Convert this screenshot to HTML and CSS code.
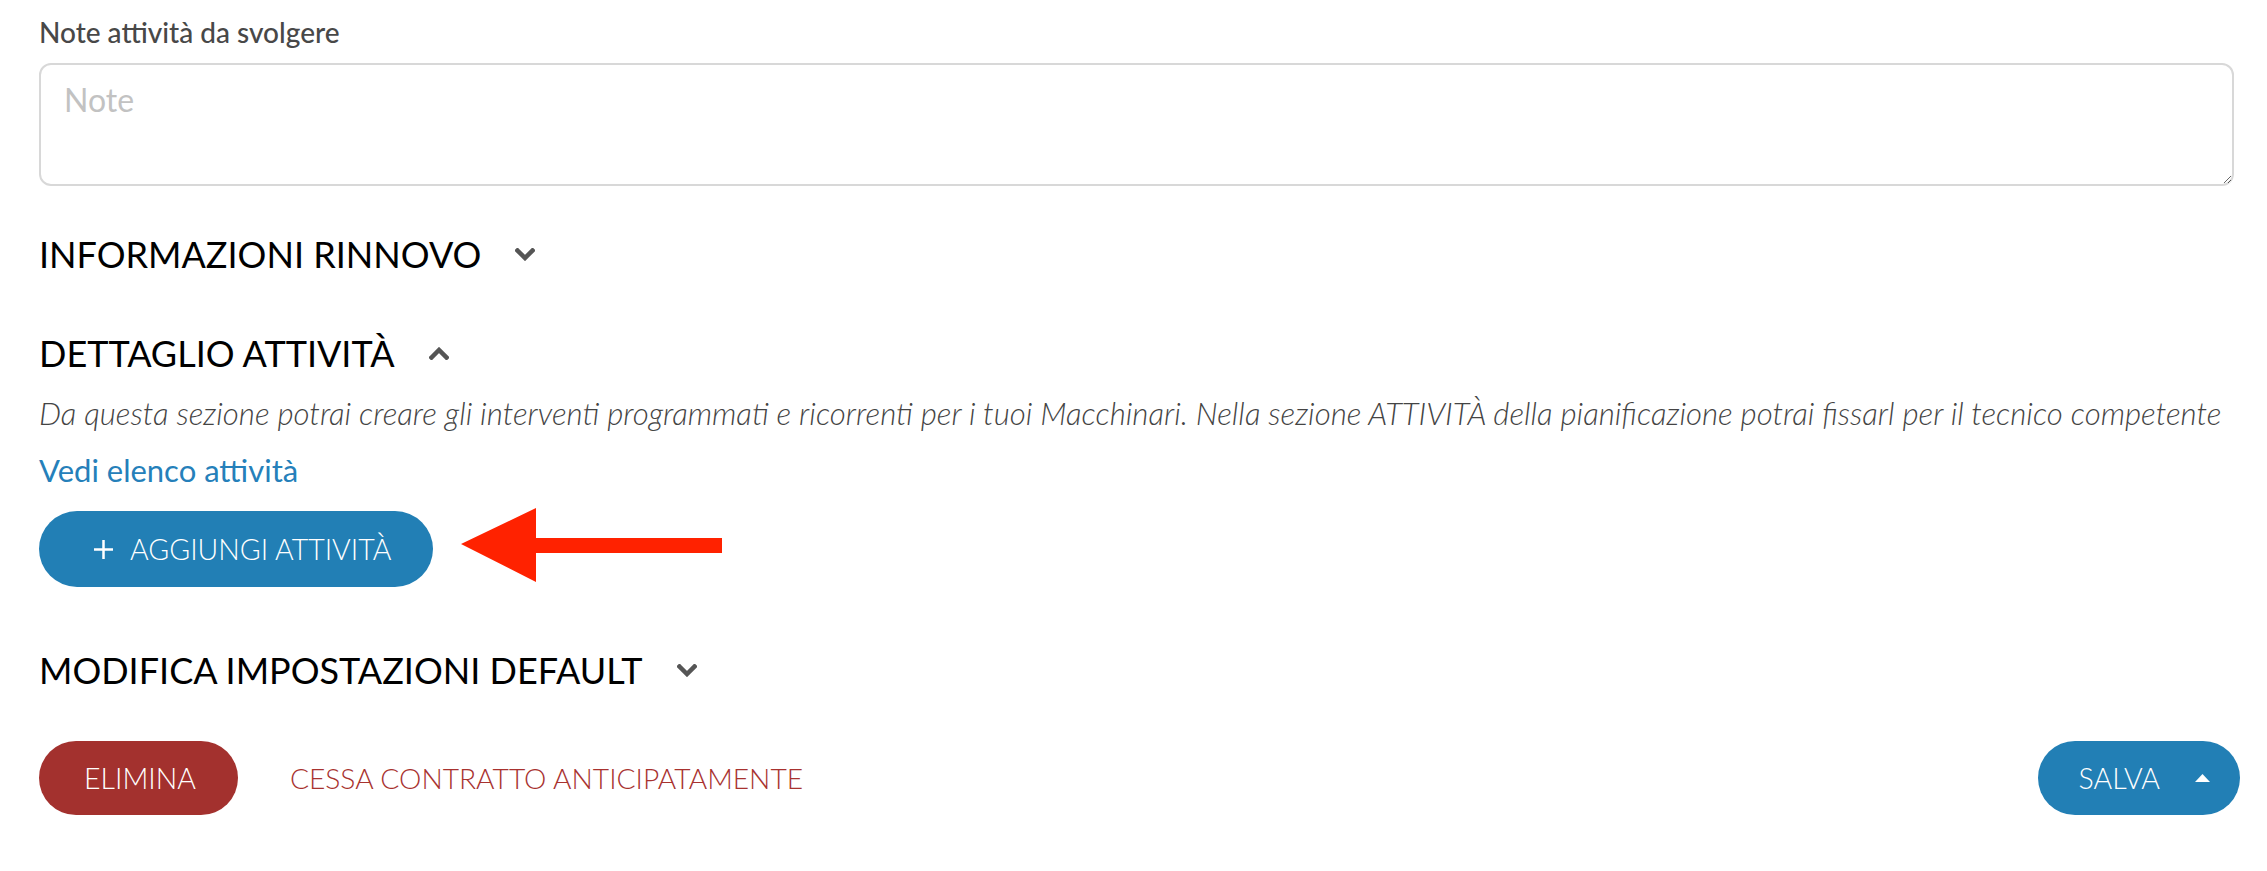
FILE: index.html
```html
<!DOCTYPE html>
<html lang="it">
<head>
  <meta charset="UTF-8">
  <title>Dettaglio contratto</title>
  <link rel="stylesheet" href="styles.css">
</head>
<body>

  <div class="page">

    <label class="field-label" for="note">Note attività da svolgere</label>
    <textarea id="note" class="notes" placeholder="Note"></textarea>

    <h3 class="section-title section-first">
      INFORMAZIONI RINNOVO
      <svg class="chev" width="20" height="13" viewBox="0 0 20 13"><polyline points="2.5,2.5 10,10 17.5,2.5"/></svg>
    </h3>

    <h3 class="section-title section-open">
      DETTAGLIO ATTIVITÀ
      <svg class="chev" width="20" height="13" viewBox="0 0 20 13"><polyline points="2.5,10.5 10,3 17.5,10.5"/></svg>
    </h3>

    <p class="hint">Da questa sezione potrai creare gli interventi programmati e ricorrenti per i tuoi Macchinari. Nella sezione ATTIVITÀ della pianificazione potrai fissarl per il tecnico competente</p>
    <a class="list-link" href="#">Vedi elenco attività</a>

    <div class="add-row">
      <button class="btn btn-blue btn-add">
        <svg class="plus" width="21" height="21" viewBox="0 0 21 21"><path d="M10.5 1v19M1 10.5h19"/></svg>
        AGGIUNGI ATTIVITÀ
      </button>
      <!-- freccia di evidenziazione -->
      <svg class="pointer" width="261" height="74" viewBox="0 0 261 74">
        <polygon points="0,36 75,0 75,30 261,30 261,45 75,45 75,74"/>
      </svg>
    </div>

    <h3 class="section-title section-last">
      MODIFICA IMPOSTAZIONI DEFAULT
      <svg class="chev" width="20" height="13" viewBox="0 0 20 13"><polyline points="2.5,2.5 10,10 17.5,2.5"/></svg>
    </h3>

    <div class="footer">
      <div class="footer-left">
        <button class="btn btn-red">ELIMINA</button>
        <a class="danger-link" href="#">CESSA CONTRATTO ANTICIPATAMENTE</a>
      </div>
      <button class="btn btn-blue btn-save">
        SALVA
        <svg class="caret" width="15" height="8" viewBox="0 0 15 8"><polygon points="0,8 7.5,0 15,8"/></svg>
      </button>
    </div>

  </div>

</body>
</html>
```

FILE: styles.css
```css
body {
  margin: 0;
  background: #fff;
  font-family: Lato, "Open Sans", sans-serif;
  color: #111;
}
.page {
  width: 2201px;
  padding: 15px 0 0 39px;
}
.field-label {
  display: block;
  font-size: 28px;
  line-height: 34px;
  font-weight: 500;
  color: #484848;
}
.notes {
  display: block;
  box-sizing: border-box;
  width: 2195px;
  height: 123px;
  margin-top: 14px;
  padding: 15px 23px;
  border: 2px solid #d8d8d8;
  border-radius: 12px;
  font-family: Lato, sans-serif;
  font-size: 32px;
  color: #333;
  resize: vertical;
  outline: none;
}
.notes::placeholder {
  color: #c2c2c2;
}
.section-title {
  display: flex;
  align-items: center;
  gap: 34px;
  margin: 0;
  font-size: 36px;
  line-height: 43px;
  font-weight: 400;
  color: #000;
}
.section-first {
  margin-top: 47px;
}
.section-open {
  margin-top: 56px;
}
.section-last {
  margin-top: 62px;
}
.chev {
  fill: none;
  stroke: #555;
  stroke-width: 4.5;
  stroke-linecap: square;
  stroke-linejoin: miter;
}
.hint {
  margin: 20px 0 0;
  font-size: 31.2px;
  line-height: 37px;
  font-weight: 300;
  font-style: italic;
  color: #444;
}
.list-link {
  display: block;
  margin-top: 20px;
  font-size: 31px;
  line-height: 37px;
  color: #2580ba;
  text-decoration: none;
}
.add-row {
  display: flex;
  align-items: center;
  gap: 28px;
  margin-top: 22px;
}
.btn {
  display: inline-flex;
  align-items: center;
  border: none;
  border-radius: 40px;
  font-family: Lato, sans-serif;
  font-size: 28.5px;
  font-weight: 300;
  color: #fff;
  cursor: pointer;
}
.btn-blue {
  background: #227fb5;
}
.btn-red {
  background: #a3312e;
  height: 74px;
  padding: 0 42px 0 45px;
}
.btn-add {
  height: 76px;
  padding: 0 42px 0 54px;
  gap: 16px;
}
.plus {
  fill: none;
  stroke: #fff;
  stroke-width: 2.5;
}
.pointer {
  fill: #ff2200;
  margin-top: -8px;
}
.footer {
  display: flex;
  justify-content: space-between;
  align-items: center;
  margin-top: 49px;
}
.footer-left {
  display: flex;
  align-items: center;
  gap: 52px;
}
.danger-link {
  font-size: 28.2px;
  font-weight: 300;
  color: #a8322f;
  text-decoration: none;
}
.btn-save {
  height: 74px;
  padding: 0 30px 0 41px;
  gap: 35px;
}
.caret {
  fill: #fff;
}
```
